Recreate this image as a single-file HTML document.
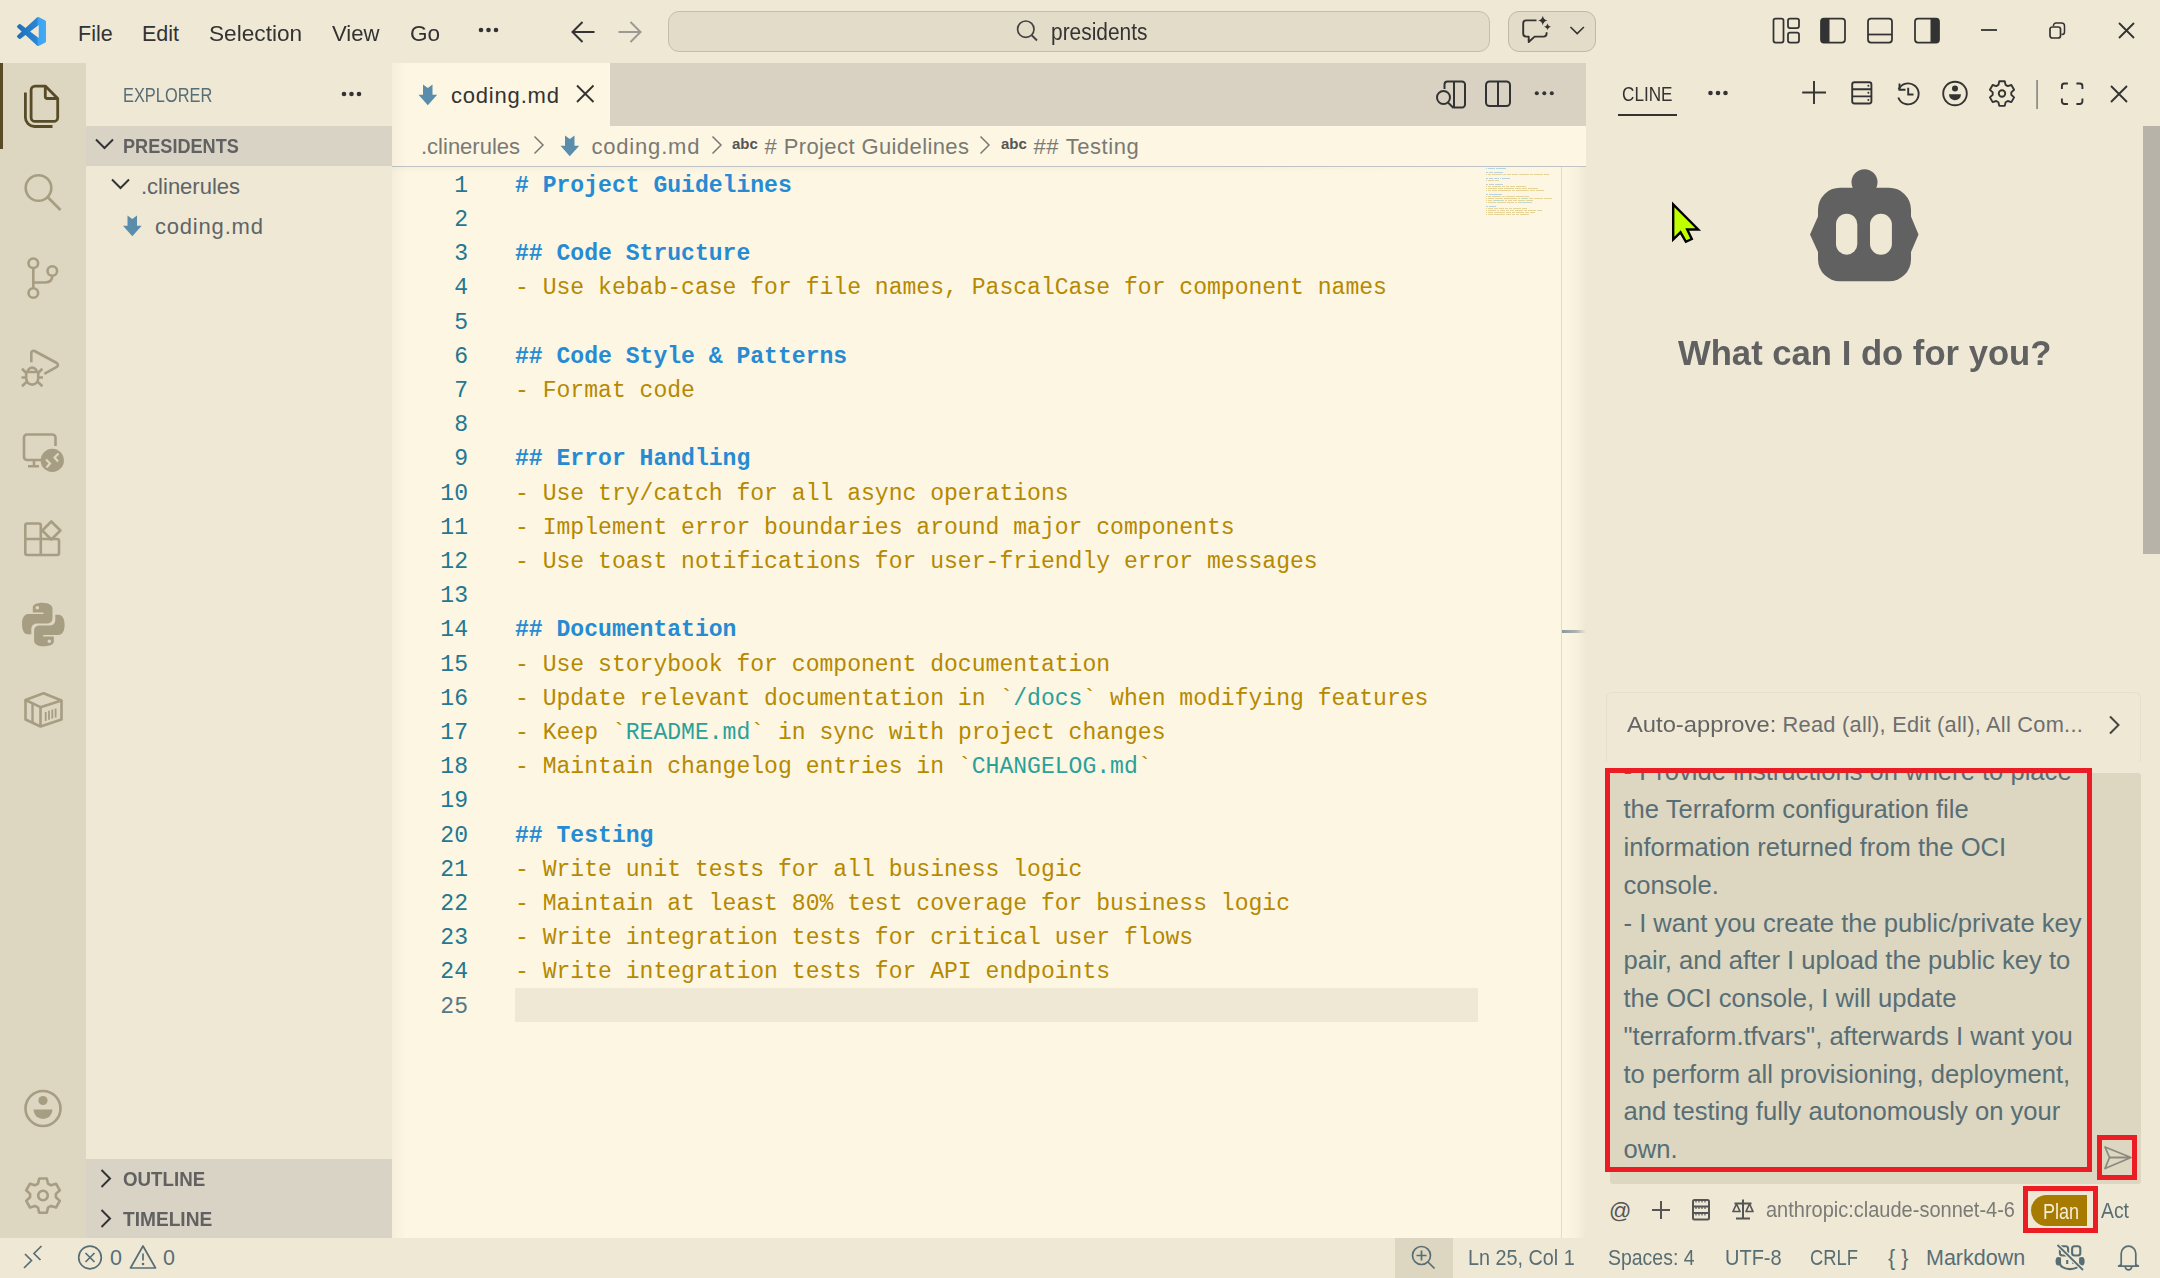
<!DOCTYPE html>
<html><head><meta charset="utf-8">
<style>
*{margin:0;padding:0;box-sizing:border-box}
html,body{width:2160px;height:1278px;overflow:hidden;background:#EEE8D5;font-family:"Liberation Sans",sans-serif;}
.abs{position:absolute}
svg{position:absolute;overflow:visible}
#title{left:0;top:0;width:2160px;height:63px;background:#EEE8D5}
.menu{position:absolute;top:20.5px;font-size:21.5px;color:#333;line-height:26px;white-space:nowrap}
#act{left:0;top:63px;width:86px;height:1175px;background:#DDD6C1}
#side{left:86px;top:63px;width:306px;height:1175px;background:#EEE8D5}
#editor{left:392px;top:63px;width:1194px;height:1175px;background:#FDF6E3}
#cline{left:1586px;top:63px;width:574px;height:1175px;background:#EEE8D5}
#status{left:0;top:1238px;width:2160px;height:40px;background:#EEE8D5}
.st{position:absolute;font-size:21.5px;color:#586E75;line-height:24px;white-space:nowrap}
.code{position:absolute;left:515px;font-family:"Liberation Mono",monospace;font-size:23.07px;white-space:pre;line-height:34.2px;height:34.2px}
.ln{position:absolute;font-family:"Liberation Mono",monospace;font-size:23.07px;color:#237893;line-height:34.2px;text-align:right;width:60px;left:408px}
.h{color:#268BD2;font-weight:bold}
.l{color:#B58900}
.c{color:#2AA198}
.bc{position:absolute;top:134px;font-size:22px;line-height:26px;color:#7A7A74;white-space:nowrap}
</style></head><body>
<div id="title" class="abs"></div>
<div id="act" class="abs"></div>
<div id="side" class="abs"></div>
<div id="editor" class="abs"></div>
<div id="cline" class="abs"></div>
<div id="status" class="abs"></div>
<svg style="left:17px;top:17px" width="29" height="29" viewBox="0 0 100 100">
<defs><linearGradient id="vsg" x1="0" y1="0" x2="1" y2="0"><stop offset="0" stop-color="#1F6FB8"/><stop offset="0.7" stop-color="#2B86D6"/><stop offset="0.72" stop-color="#3DA2F0"/><stop offset="1" stop-color="#44AAF5"/></linearGradient></defs>
<path fill="url(#vsg)" d="M96.46 10.8L75.86.87a6.23 6.23 0 0 0-7.1 1.2L29.3 38.08 12.12 25.04a4.16 4.16 0 0 0-5.32.24L1.3 30.28a4.17 4.17 0 0 0 0 6.16L16.2 50 1.3 63.56a4.17 4.17 0 0 0 0 6.16l5.5 5a4.16 4.16 0 0 0 5.32.24L29.3 61.92l39.46 36.01a6.22 6.22 0 0 0 7.1 1.2l20.6-9.91A6.25 6.25 0 0 0 100 83.59V16.41a6.25 6.25 0 0 0-3.54-5.63zM75.02 72.7L45.08 50l29.94-22.7v45.4z"/>
</svg>
<div class="menu" style="left:78px">File</div>
<div class="menu" style="left:142px">Edit</div>
<div class="menu" style="left:209px;transform:scaleX(1.054);transform-origin:0 0">Selection</div>
<div class="menu" style="left:332px;transform:scaleX(1.03);transform-origin:0 0">View</div>
<div class="menu" style="left:410px;transform:scaleX(1.05);transform-origin:0 0">Go</div>
<svg style="left:478px;top:26px" width="22" height="8"><circle cx="3" cy="4" r="2.3" fill="#333"/><circle cx="10.5" cy="4" r="2.3" fill="#333"/><circle cx="18" cy="4" r="2.3" fill="#333"/></svg>
<svg style="left:570px;top:20px" width="26" height="24" viewBox="0 0 26 24"><path d="M2.5 12H24.5M12.5 2L2.5 12L12.5 22" fill="none" stroke="#333" stroke-width="2"/></svg>
<svg style="left:617px;top:20px" width="26" height="24" viewBox="0 0 26 24"><path d="M1.5 12H23.5M13.5 2L23.5 12L13.5 22" fill="none" stroke="#9A9A92" stroke-width="2"/></svg>
<div class="abs" style="left:668px;top:11px;width:822px;height:41px;background:#E3DCC9;border:1.5px solid #C4BFAD;border-radius:11px"></div>
<svg style="left:1015px;top:18px" width="26" height="26" viewBox="0 0 26 26"><circle cx="10.8" cy="11.2" r="8.2" fill="none" stroke="#444" stroke-width="1.7"/><path d="M16.5 17L22 22.5" stroke="#444" stroke-width="1.9"/></svg>
<div class="menu" style="left:1050.5px;top:19.3px;font-size:23.5px;color:#333;transform:scaleX(0.89);transform-origin:0 0">presidents</div>
<div class="abs" style="left:1508px;top:11px;width:88px;height:41px;background:#E3DCC9;border:1.5px solid #BFBAA8;border-radius:11px"></div>
<svg style="left:0;top:0" width="1600" height="60" viewBox="0 0 1600 60"><path d="M1536.5 20.4H1526.2a3 3 0 0 0-3 3V33.6a3 3 0 0 0 3 3H1528.7V42L1534.6 36.6H1543.6a3 3 0 0 0 3-3V32.2" fill="none" stroke="#333" stroke-width="1.9" stroke-linejoin="round"/><path d="M1542.8 15.8Q1543.5 19.9 1547.6 20.6Q1543.5 21.3 1542.8 25.4Q1542.1 21.3 1538 20.6Q1542.1 19.9 1542.8 15.8z" fill="#333"/><path d="M1547.5 23.2Q1548 26.2 1551 26.7Q1548 27.2 1547.5 30.2Q1547 27.2 1544 26.7Q1547 26.2 1547.5 23.2z" fill="#333"/><path d="M1570.5 27L1577.2 33.6L1583.9 27" fill="none" stroke="#333" stroke-width="1.6"/></svg>
<!-- layout icons -->
<svg style="left:1771px;top:16px" width="30" height="29" viewBox="0 0 30 29"><rect x="2.5" y="2.5" width="10" height="24" rx="2" fill="none" stroke="#333" stroke-width="1.75"/><rect x="17" y="2.5" width="11" height="9.5" rx="2" fill="none" stroke="#333" stroke-width="1.75"/><rect x="17" y="16.5" width="11" height="10" rx="2" fill="none" stroke="#333" stroke-width="1.75"/></svg>
<svg style="left:1818px;top:16px" width="30" height="29" viewBox="0 0 30 29"><rect x="3" y="2.5" width="24" height="24" rx="3" fill="none" stroke="#333" stroke-width="1.75"/><path d="M6 2.5h5.5v24H6a3 3 0 0 1-3-3v-18a3 3 0 0 1 3-3z" fill="#333"/></svg>
<svg style="left:1865px;top:16px" width="30" height="29" viewBox="0 0 30 29"><rect x="3" y="2.5" width="24" height="24" rx="3" fill="none" stroke="#333" stroke-width="1.75"/><path d="M3 18.5H27" stroke="#333" stroke-width="1.75"/></svg>
<svg style="left:1912px;top:16px" width="30" height="29" viewBox="0 0 30 29"><rect x="3" y="2.5" width="24" height="24" rx="3" fill="none" stroke="#333" stroke-width="1.75"/><path d="M18.5 2.5H24a3 3 0 0 1 3 3v18a3 3 0 0 1-3 3h-5.5z" fill="#333"/></svg>
<svg style="left:1980px;top:28px" width="18" height="4"><path d="M1 2H17" stroke="#333" stroke-width="1.8"/></svg>
<svg style="left:2048px;top:21px" width="19" height="19" viewBox="0 0 19 19"><rect x="2" y="6" width="10.5" height="11" rx="2.3" fill="none" stroke="#333" stroke-width="1.7"/><path d="M5.5 5V4.5a2.5 2.5 0 0 1 2.5-2.5H13.5A3 3 0 0 1 16.5 5v6A2.5 2.5 0 0 1 14 13.5h-.5" fill="none" stroke="#333" stroke-width="1.5"/></svg>
<svg style="left:2117px;top:21px" width="19" height="19" viewBox="0 0 19 19"><path d="M2 2L17 17M17 2L2 17" stroke="#333" stroke-width="1.8"/></svg>

<div class="abs" style="left:0;top:63px;width:3px;height:86px;background:#584C27"></div>
<svg style="left:0;top:0" width="86" height="1238" viewBox="0 0 86 1238">
<g fill="none" stroke="#584C27" stroke-width="2.8" stroke-linejoin="round">
<path d="M45.3 86.1H35.1a4 4 0 0 0-4 4v27.3a4 4 0 0 0 4 4h18.6a4 4 0 0 0 4-4V98.5z"/>
<path d="M45.3 86.1V96.5a2 2 0 0 0 2 2h10.4"/>
<path d="M25.4 92.5V117.5a9 9 0 0 0 9 9H52.5"/>
</g>
<g fill="none" stroke="#A69D82" stroke-width="2.6" stroke-linejoin="round">
<circle cx="38.5" cy="188" r="12.8"/>
<path d="M48 197.5L60.5 210"/>
<circle cx="33.3" cy="263.3" r="4.8"/>
<circle cx="52.3" cy="271" r="4.8"/>
<circle cx="33.3" cy="293" r="4.8"/>
<path d="M33.3 268.1V288.2M52.3 275.8Q52.3 282.5 45 282.5H33.3"/>
<path d="M31.3 362.3V353a2.2 2.2 0 0 1 3.2-2l22.3 12a2.2 2.2 0 0 1 0 3.8L44.3 373.8"/>
<path d="M27.8 372a4.4 4.4 0 0 1 8.8 0"/>
<path d="M26.2 372H38.2V378.6a6 6 0 0 1-12 0z"/>
<path d="M22 368.8L26.3 373M42.4 368.8L38.1 373M21.5 377.5H26.2M38.2 377.5H43M22 386.2L26.5 382M42.4 386.2L37.9 382"/>
<path d="M55.5 446V438a3 3 0 0 0-3-3.5H27a3 3 0 0 0-3 3v19.5a3 3 0 0 0 3 3H41.5M34 461V466M28 466.2H39"/>
<path d="M27.3 523.5h11.5a2 2 0 0 1 2 2V539H26.3a1 1 0 0 1-1-1V525.5a2 2 0 0 1 2-2z"/>
<path d="M25.3 539V553a2 2 0 0 0 2 2H57a2 2 0 0 0 2-2V541a2 2 0 0 0-2-2H40.8V555"/>
<path d="M51.3 521.5L60.4 530.5L51.3 539.5L42.3 530.5z"/>
<path d="M25.5 700L43.5 693.3L61.5 700.5L40.5 707.2z"/>
<path d="M25.5 700V719.5L40.5 726.5V707.2M61.5 700.5V719.5L40.5 726.5"/>
<path d="M32.5 703V722" stroke-width="2.4"/>
<path d="M45.7 712V721M49 710.8V719.8M52.3 709.6V718.6M55.6 708.4V717.4" stroke-width="1.8"/>
<circle cx="43" cy="1108.5" r="17.5"/>
</g>
<circle cx="52.3" cy="460.4" r="11.6" fill="#A69D82"/>
<path d="M46 459.5L50 463.5L46.5 467.5M58.5 453.5L54.5 457.5L58 461.5" fill="none" stroke="#DDD6C1" stroke-width="2.2"/>
<path fill="#A69D82" d="M43.2 602.8c-11 0-10.4 4.8-10.4 4.8v5h10.6v1.5H28.6s-6.6-.8-6.6 9.9 5.8 10.3 5.8 10.3h3.5v-5s-.2-5.8 5.7-5.8h10s5.5.1 5.5-5.3v-9s.9-6.3-9.3-6.3zm-5.9 3.2a1.8 1.8 0 1 1 0 3.6 1.8 1.8 0 0 1 0-3.6z"/>
<path fill="#A69D82" d="M43.4 646.3c11 0 10.4-4.8 10.4-4.8v-5H43.2V635h14.8s6.6.8 6.6-9.9-5.8-10.3-5.8-10.3h-3.5v5s.2 5.8-5.7 5.8h-10s-5.5-.1-5.5 5.3v9s-.9 6.3 9.3 6.3zm5.9-3.2a1.8 1.8 0 1 1 0-3.6 1.8 1.8 0 0 1 0 3.6z"/>
<circle cx="43" cy="1100.5" r="4.6" fill="#A69D82"/>
<path d="M33.5 1109.5h19a0 0 0 0 1 0 0 9.5 9.5 0 0 1-19 0z" fill="#A69D82"/>
<g transform="translate(43 1195.5)">
<path fill="none" stroke="#A69D82" stroke-width="2.6" stroke-linejoin="round" d="M-3.8-17h7.6l1.2 5.1 3 1.7 5-1.6 3.8 6.6-3.9 3.6v3.4l3.9 3.6-3.8 6.6-5-1.6-3 1.7-1.2 5.1h-7.6l-1.2-5.1-3-1.7-5 1.6-3.8-6.6 3.9-3.6v-3.4l-3.9-3.6 3.8-6.6 5 1.6 3-1.7z"/>
<circle r="4.8" fill="none" stroke="#A69D82" stroke-width="2.6"/>
</g>
</svg>

<div class="abs" style="left:123px;top:84px;font-size:19.5px;line-height:22px;color:#586E75;transform:scaleX(0.84);transform-origin:0 0;white-space:nowrap">EXPLORER</div>
<svg style="left:341px;top:90px" width="22" height="8"><circle cx="3" cy="4" r="2.3" fill="#333"/><circle cx="10.5" cy="4" r="2.3" fill="#333"/><circle cx="18" cy="4" r="2.3" fill="#333"/></svg>
<div class="abs" style="left:86px;top:126px;width:306px;height:40px;background:#D8D3C4"></div>
<svg style="left:94px;top:136px" width="22" height="16" viewBox="0 0 22 16"><path d="M2 3.5L10.5 12L19 3.5" fill="none" stroke="#333" stroke-width="2"/></svg>
<div class="abs" style="left:123px;top:135px;font-size:19.5px;line-height:22px;color:#616161;font-weight:bold;transform:scaleX(0.93);transform-origin:0 0;white-space:nowrap">PRESIDENTS</div>
<svg style="left:110px;top:176px" width="22" height="16" viewBox="0 0 22 16"><path d="M2 3.5L10.5 12L19 3.5" fill="none" stroke="#333" stroke-width="2"/></svg>
<div class="abs" style="left:141px;top:174px;font-size:22px;line-height:26px;color:#5F6466;white-space:nowrap">.clinerules</div>
<svg style="left:123px;top:215px" width="19" height="22" viewBox="0 0 19 22"><path d="M4.5 0.4L9.3 4L14 0.4V10.8H18.7L9.3 21.2L0 10.8H4.5z" fill="#5A8DAC"/></svg>
<div class="abs" style="left:155px;top:214px;font-size:22px;line-height:26px;color:#5F6466;letter-spacing:0.8px;white-space:nowrap">coding.md</div>
<div class="abs" style="left:86px;top:1159px;width:306px;height:79px;background:#D8D3C4"></div>
<svg style="left:98px;top:1168px" width="16" height="22" viewBox="0 0 16 22"><path d="M3.5 2L12 10.5L3.5 19" fill="none" stroke="#333" stroke-width="2"/></svg>
<div class="abs" style="left:123px;top:1168px;font-size:19.5px;line-height:22px;color:#616161;font-weight:bold;transform:scaleX(0.96);transform-origin:0 0;white-space:nowrap">OUTLINE</div>
<svg style="left:98px;top:1208px" width="16" height="22" viewBox="0 0 16 22"><path d="M3.5 2L12 10.5L3.5 19" fill="none" stroke="#333" stroke-width="2"/></svg>
<div class="abs" style="left:123px;top:1208px;font-size:19.5px;line-height:22px;color:#616161;font-weight:bold;transform:scaleX(0.98);transform-origin:0 0;white-space:nowrap">TIMELINE</div>

<!-- tabs bar -->
<div class="abs" style="left:392px;top:63px;width:1194px;height:63px;background:#D9D2C2"></div>
<div class="abs" style="left:392px;top:63px;width:218px;height:63px;background:#FDF6E3"></div>
<svg style="left:418px;top:84px" width="20" height="22" viewBox="0 0 19 22"><path d="M4.5 0.4L9.3 4L14 0.4V10.8H18.7L9.3 21.2L0 10.8H4.5z" fill="#5A8DAC"/></svg>
<div class="abs" style="left:451px;top:83px;font-size:22px;line-height:26px;color:#333;letter-spacing:0.8px;white-space:nowrap">coding.md</div>
<svg style="left:575px;top:84px" width="20" height="20" viewBox="0 0 20 20"><path d="M2 1.5L18.5 18M18.5 1.5L2 18" stroke="#333" stroke-width="1.9"/></svg>
<svg style="left:1434px;top:79px" width="34" height="32" viewBox="0 0 34 32"><path d="M10.5 10V5.5a3 3 0 0 1 3-3H28a3 3 0 0 1 3 3V25.5a3 3 0 0 1-3 3H19.5M20 2.5V28.5" fill="none" stroke="#333" stroke-width="2"/><circle cx="9.5" cy="18.5" r="6.5" fill="none" stroke="#333" stroke-width="2"/><path d="M14 23.5L19.5 29" stroke="#333" stroke-width="2"/></svg>
<svg style="left:1483px;top:79px" width="30" height="30" viewBox="0 0 30 30"><rect x="3" y="2.5" width="24" height="24.5" rx="3.5" fill="none" stroke="#333" stroke-width="2"/><path d="M15 2.5V27" stroke="#333" stroke-width="2"/></svg>
<svg style="left:1533px;top:89px" width="24" height="8"><circle cx="3.8" cy="4.2" r="2" fill="#333"/><circle cx="11.3" cy="4.2" r="2" fill="#333"/><circle cx="18.8" cy="4.2" r="2" fill="#333"/></svg>
<!-- breadcrumbs -->
<div class="abs" style="left:392px;top:126px;width:1194px;height:41px;background:#FDF6E3;border-bottom:1px solid #BFC3C6"></div>
<div class="abs bc" style="left:421px">.clinerules</div>
<svg style="left:532px;top:135px" width="14" height="20" viewBox="0 0 14 20"><path d="M2.5 1.5L11 10L2.5 18.5" fill="none" stroke="#7A7A74" stroke-width="1.5"/></svg>
<svg style="left:560px;top:135px" width="20" height="22" viewBox="0 0 19 22"><path d="M4.5 0.4L9.3 4L14 0.4V10.8H18.7L9.3 21.2L0 10.8H4.5z" fill="#5A8DAC"/></svg>
<div class="abs bc" style="left:591.5px;letter-spacing:0.8px">coding.md</div>
<svg style="left:710px;top:135px" width="14" height="20" viewBox="0 0 14 20"><path d="M2.5 1.5L11 10L2.5 18.5" fill="none" stroke="#7A7A74" stroke-width="1.5"/></svg>
<div class="abs" style="left:732px;top:135px;font-size:15px;line-height:18px;font-weight:bold;color:#555;white-space:nowrap;transform:scaleX(1.0);transform-origin:0 0">abc</div>
<div class="abs bc" style="left:764.5px;letter-spacing:0.4px">#&nbsp;Project Guidelines</div>
<svg style="left:978px;top:135px" width="14" height="20" viewBox="0 0 14 20"><path d="M2.5 1.5L11 10L2.5 18.5" fill="none" stroke="#7A7A74" stroke-width="1.5"/></svg>
<div class="abs" style="left:1001px;top:135px;font-size:15px;line-height:18px;font-weight:bold;color:#555;white-space:nowrap">abc</div>
<div class="abs bc" style="left:1033.5px;letter-spacing:0.55px">##&nbsp;Testing</div>
<!-- scrollbar area -->
<div class="abs" style="left:1561px;top:167px;width:1px;height:1071px;background:#E2DBC8"></div>
<div class="abs" style="left:1562px;top:630px;width:24px;height:3px;background:#8C9A9C"></div>
<div class="abs" style="left:1562px;top:167px;width:24px;height:1071px;background:linear-gradient(90deg,rgba(238,232,213,0),rgba(238,232,213,0.35) 60%,rgba(238,232,213,1))"></div>
<!-- current line -->
<div class="abs" style="left:515px;top:988px;width:963px;height:34px;background:#EEE8D5"></div>
<div class="ln" style="top:168.7px">1</div>
<div class="code h" style="top:168.7px"># Project Guidelines</div>
<div class="ln" style="top:202.9px">2</div>
<div class="ln" style="top:237.1px">3</div>
<div class="code h" style="top:237.1px">## Code Structure</div>
<div class="ln" style="top:271.3px">4</div>
<div class="code l" style="top:271.3px">- Use kebab-case for file names, PascalCase for component names</div>
<div class="ln" style="top:305.5px">5</div>
<div class="ln" style="top:339.7px">6</div>
<div class="code h" style="top:339.7px">## Code Style &amp; Patterns</div>
<div class="ln" style="top:373.9px">7</div>
<div class="code l" style="top:373.9px">- Format code</div>
<div class="ln" style="top:408.1px">8</div>
<div class="ln" style="top:442.3px">9</div>
<div class="code h" style="top:442.3px">## Error Handling</div>
<div class="ln" style="top:476.5px">10</div>
<div class="code l" style="top:476.5px">- Use try/catch for all async operations</div>
<div class="ln" style="top:510.7px">11</div>
<div class="code l" style="top:510.7px">- Implement error boundaries around major components</div>
<div class="ln" style="top:544.9px">12</div>
<div class="code l" style="top:544.9px">- Use toast notifications for user-friendly error messages</div>
<div class="ln" style="top:579.1px">13</div>
<div class="ln" style="top:613.3px">14</div>
<div class="code h" style="top:613.3px">## Documentation</div>
<div class="ln" style="top:647.5px">15</div>
<div class="code l" style="top:647.5px">- Use storybook for component documentation</div>
<div class="ln" style="top:681.7px">16</div>
<div class="code l" style="top:681.7px">- Update relevant documentation in `<span class="c">/docs</span>` when modifying features</div>
<div class="ln" style="top:715.9px">17</div>
<div class="code l" style="top:715.9px">- Keep `<span class="c">README.md</span>` in sync with project changes</div>
<div class="ln" style="top:750.1px">18</div>
<div class="code l" style="top:750.1px">- Maintain changelog entries in `<span class="c">CHANGELOG.md</span>`</div>
<div class="ln" style="top:784.3px">19</div>
<div class="ln" style="top:818.5px">20</div>
<div class="code h" style="top:818.5px">## Testing</div>
<div class="ln" style="top:852.7px">21</div>
<div class="code l" style="top:852.7px">- Write unit tests for all business logic</div>
<div class="ln" style="top:886.9px">22</div>
<div class="code l" style="top:886.9px">- Maintain at least 80% test coverage for business logic</div>
<div class="ln" style="top:921.1px">23</div>
<div class="code l" style="top:921.1px">- Write integration tests for critical user flows</div>
<div class="ln" style="top:955.3px">24</div>
<div class="code l" style="top:955.3px">- Write integration tests for API endpoints</div>
<div class="ln" style="top:989.5px;color:#567983">25</div>
<div class="abs" style="left:1486px;top:167.5px;width:1px;height:1.4px;background:#268BD2;opacity:0.32"></div>
<div class="abs" style="left:1488px;top:167.5px;width:7px;height:1.4px;background:#268BD2;opacity:0.32"></div>
<div class="abs" style="left:1496px;top:167.5px;width:10px;height:1.4px;background:#268BD2;opacity:0.32"></div>
<div class="abs" style="left:1486px;top:171.5px;width:2px;height:1.4px;background:#268BD2;opacity:0.32"></div>
<div class="abs" style="left:1489px;top:171.5px;width:4px;height:1.4px;background:#268BD2;opacity:0.32"></div>
<div class="abs" style="left:1494px;top:171.5px;width:9px;height:1.4px;background:#268BD2;opacity:0.32"></div>
<div class="abs" style="left:1486px;top:173.5px;width:1px;height:1.4px;background:#B58900;opacity:0.32"></div>
<div class="abs" style="left:1488px;top:173.5px;width:3px;height:1.4px;background:#B58900;opacity:0.32"></div>
<div class="abs" style="left:1492px;top:173.5px;width:10px;height:1.4px;background:#B58900;opacity:0.32"></div>
<div class="abs" style="left:1503px;top:173.5px;width:3px;height:1.4px;background:#B58900;opacity:0.32"></div>
<div class="abs" style="left:1507px;top:173.5px;width:4px;height:1.4px;background:#B58900;opacity:0.32"></div>
<div class="abs" style="left:1512px;top:173.5px;width:6px;height:1.4px;background:#B58900;opacity:0.32"></div>
<div class="abs" style="left:1519px;top:173.5px;width:10px;height:1.4px;background:#B58900;opacity:0.32"></div>
<div class="abs" style="left:1530px;top:173.5px;width:3px;height:1.4px;background:#B58900;opacity:0.32"></div>
<div class="abs" style="left:1534px;top:173.5px;width:9px;height:1.4px;background:#B58900;opacity:0.32"></div>
<div class="abs" style="left:1544px;top:173.5px;width:5px;height:1.4px;background:#B58900;opacity:0.32"></div>
<div class="abs" style="left:1486px;top:177.5px;width:2px;height:1.4px;background:#268BD2;opacity:0.32"></div>
<div class="abs" style="left:1489px;top:177.5px;width:4px;height:1.4px;background:#268BD2;opacity:0.32"></div>
<div class="abs" style="left:1494px;top:177.5px;width:5px;height:1.4px;background:#268BD2;opacity:0.32"></div>
<div class="abs" style="left:1500px;top:177.5px;width:1px;height:1.4px;background:#268BD2;opacity:0.32"></div>
<div class="abs" style="left:1502px;top:177.5px;width:8px;height:1.4px;background:#268BD2;opacity:0.32"></div>
<div class="abs" style="left:1486px;top:179.5px;width:1px;height:1.4px;background:#B58900;opacity:0.32"></div>
<div class="abs" style="left:1488px;top:179.5px;width:6px;height:1.4px;background:#B58900;opacity:0.32"></div>
<div class="abs" style="left:1495px;top:179.5px;width:4px;height:1.4px;background:#B58900;opacity:0.32"></div>
<div class="abs" style="left:1486px;top:183.5px;width:2px;height:1.4px;background:#268BD2;opacity:0.32"></div>
<div class="abs" style="left:1489px;top:183.5px;width:5px;height:1.4px;background:#268BD2;opacity:0.32"></div>
<div class="abs" style="left:1495px;top:183.5px;width:8px;height:1.4px;background:#268BD2;opacity:0.32"></div>
<div class="abs" style="left:1486px;top:185.5px;width:1px;height:1.4px;background:#B58900;opacity:0.32"></div>
<div class="abs" style="left:1488px;top:185.5px;width:3px;height:1.4px;background:#B58900;opacity:0.32"></div>
<div class="abs" style="left:1492px;top:185.5px;width:9px;height:1.4px;background:#B58900;opacity:0.32"></div>
<div class="abs" style="left:1502px;top:185.5px;width:3px;height:1.4px;background:#B58900;opacity:0.32"></div>
<div class="abs" style="left:1506px;top:185.5px;width:3px;height:1.4px;background:#B58900;opacity:0.32"></div>
<div class="abs" style="left:1510px;top:185.5px;width:5px;height:1.4px;background:#B58900;opacity:0.32"></div>
<div class="abs" style="left:1516px;top:185.5px;width:10px;height:1.4px;background:#B58900;opacity:0.32"></div>
<div class="abs" style="left:1486px;top:187.5px;width:1px;height:1.4px;background:#B58900;opacity:0.32"></div>
<div class="abs" style="left:1488px;top:187.5px;width:9px;height:1.4px;background:#B58900;opacity:0.32"></div>
<div class="abs" style="left:1498px;top:187.5px;width:5px;height:1.4px;background:#B58900;opacity:0.32"></div>
<div class="abs" style="left:1504px;top:187.5px;width:10px;height:1.4px;background:#B58900;opacity:0.32"></div>
<div class="abs" style="left:1515px;top:187.5px;width:6px;height:1.4px;background:#B58900;opacity:0.32"></div>
<div class="abs" style="left:1522px;top:187.5px;width:5px;height:1.4px;background:#B58900;opacity:0.32"></div>
<div class="abs" style="left:1528px;top:187.5px;width:10px;height:1.4px;background:#B58900;opacity:0.32"></div>
<div class="abs" style="left:1486px;top:189.5px;width:1px;height:1.4px;background:#B58900;opacity:0.32"></div>
<div class="abs" style="left:1488px;top:189.5px;width:3px;height:1.4px;background:#B58900;opacity:0.32"></div>
<div class="abs" style="left:1492px;top:189.5px;width:5px;height:1.4px;background:#B58900;opacity:0.32"></div>
<div class="abs" style="left:1498px;top:189.5px;width:13px;height:1.4px;background:#B58900;opacity:0.32"></div>
<div class="abs" style="left:1512px;top:189.5px;width:3px;height:1.4px;background:#B58900;opacity:0.32"></div>
<div class="abs" style="left:1516px;top:189.5px;width:13px;height:1.4px;background:#B58900;opacity:0.32"></div>
<div class="abs" style="left:1530px;top:189.5px;width:5px;height:1.4px;background:#B58900;opacity:0.32"></div>
<div class="abs" style="left:1536px;top:189.5px;width:8px;height:1.4px;background:#B58900;opacity:0.32"></div>
<div class="abs" style="left:1486px;top:193.5px;width:2px;height:1.4px;background:#268BD2;opacity:0.32"></div>
<div class="abs" style="left:1489px;top:193.5px;width:13px;height:1.4px;background:#268BD2;opacity:0.32"></div>
<div class="abs" style="left:1486px;top:195.5px;width:1px;height:1.4px;background:#B58900;opacity:0.32"></div>
<div class="abs" style="left:1488px;top:195.5px;width:3px;height:1.4px;background:#B58900;opacity:0.32"></div>
<div class="abs" style="left:1492px;top:195.5px;width:9px;height:1.4px;background:#B58900;opacity:0.32"></div>
<div class="abs" style="left:1502px;top:195.5px;width:3px;height:1.4px;background:#B58900;opacity:0.32"></div>
<div class="abs" style="left:1506px;top:195.5px;width:9px;height:1.4px;background:#B58900;opacity:0.32"></div>
<div class="abs" style="left:1516px;top:195.5px;width:13px;height:1.4px;background:#B58900;opacity:0.32"></div>
<div class="abs" style="left:1486px;top:197.5px;width:1px;height:1.4px;background:#B58900;opacity:0.32"></div>
<div class="abs" style="left:1488px;top:197.5px;width:6px;height:1.4px;background:#B58900;opacity:0.32"></div>
<div class="abs" style="left:1495px;top:197.5px;width:8px;height:1.4px;background:#B58900;opacity:0.32"></div>
<div class="abs" style="left:1504px;top:197.5px;width:13px;height:1.4px;background:#B58900;opacity:0.32"></div>
<div class="abs" style="left:1518px;top:197.5px;width:2px;height:1.4px;background:#B58900;opacity:0.32"></div>
<div class="abs" style="left:1521px;top:197.5px;width:1px;height:1.4px;background:#B58900;opacity:0.32"></div>
<div class="abs" style="left:1522px;top:197.5px;width:5px;height:1.4px;background:#2AA198;opacity:0.32"></div>
<div class="abs" style="left:1527px;top:197.5px;width:1px;height:1.4px;background:#B58900;opacity:0.32"></div>
<div class="abs" style="left:1529px;top:197.5px;width:4px;height:1.4px;background:#B58900;opacity:0.32"></div>
<div class="abs" style="left:1534px;top:197.5px;width:9px;height:1.4px;background:#B58900;opacity:0.32"></div>
<div class="abs" style="left:1544px;top:197.5px;width:8px;height:1.4px;background:#B58900;opacity:0.32"></div>
<div class="abs" style="left:1486px;top:199.5px;width:1px;height:1.4px;background:#B58900;opacity:0.32"></div>
<div class="abs" style="left:1488px;top:199.5px;width:4px;height:1.4px;background:#B58900;opacity:0.32"></div>
<div class="abs" style="left:1493px;top:199.5px;width:1px;height:1.4px;background:#B58900;opacity:0.32"></div>
<div class="abs" style="left:1494px;top:199.5px;width:9px;height:1.4px;background:#2AA198;opacity:0.32"></div>
<div class="abs" style="left:1503px;top:199.5px;width:1px;height:1.4px;background:#B58900;opacity:0.32"></div>
<div class="abs" style="left:1505px;top:199.5px;width:2px;height:1.4px;background:#B58900;opacity:0.32"></div>
<div class="abs" style="left:1508px;top:199.5px;width:4px;height:1.4px;background:#B58900;opacity:0.32"></div>
<div class="abs" style="left:1513px;top:199.5px;width:4px;height:1.4px;background:#B58900;opacity:0.32"></div>
<div class="abs" style="left:1518px;top:199.5px;width:7px;height:1.4px;background:#B58900;opacity:0.32"></div>
<div class="abs" style="left:1526px;top:199.5px;width:7px;height:1.4px;background:#B58900;opacity:0.32"></div>
<div class="abs" style="left:1486px;top:201.5px;width:1px;height:1.4px;background:#B58900;opacity:0.32"></div>
<div class="abs" style="left:1488px;top:201.5px;width:8px;height:1.4px;background:#B58900;opacity:0.32"></div>
<div class="abs" style="left:1497px;top:201.5px;width:9px;height:1.4px;background:#B58900;opacity:0.32"></div>
<div class="abs" style="left:1507px;top:201.5px;width:7px;height:1.4px;background:#B58900;opacity:0.32"></div>
<div class="abs" style="left:1515px;top:201.5px;width:2px;height:1.4px;background:#B58900;opacity:0.32"></div>
<div class="abs" style="left:1518px;top:201.5px;width:1px;height:1.4px;background:#B58900;opacity:0.32"></div>
<div class="abs" style="left:1519px;top:201.5px;width:12px;height:1.4px;background:#2AA198;opacity:0.32"></div>
<div class="abs" style="left:1531px;top:201.5px;width:1px;height:1.4px;background:#B58900;opacity:0.32"></div>
<div class="abs" style="left:1486px;top:205.5px;width:2px;height:1.4px;background:#268BD2;opacity:0.32"></div>
<div class="abs" style="left:1489px;top:205.5px;width:7px;height:1.4px;background:#268BD2;opacity:0.32"></div>
<div class="abs" style="left:1486px;top:207.5px;width:1px;height:1.4px;background:#B58900;opacity:0.32"></div>
<div class="abs" style="left:1488px;top:207.5px;width:5px;height:1.4px;background:#B58900;opacity:0.32"></div>
<div class="abs" style="left:1494px;top:207.5px;width:4px;height:1.4px;background:#B58900;opacity:0.32"></div>
<div class="abs" style="left:1499px;top:207.5px;width:5px;height:1.4px;background:#B58900;opacity:0.32"></div>
<div class="abs" style="left:1505px;top:207.5px;width:3px;height:1.4px;background:#B58900;opacity:0.32"></div>
<div class="abs" style="left:1509px;top:207.5px;width:3px;height:1.4px;background:#B58900;opacity:0.32"></div>
<div class="abs" style="left:1513px;top:207.5px;width:8px;height:1.4px;background:#B58900;opacity:0.32"></div>
<div class="abs" style="left:1522px;top:207.5px;width:5px;height:1.4px;background:#B58900;opacity:0.32"></div>
<div class="abs" style="left:1486px;top:209.5px;width:1px;height:1.4px;background:#B58900;opacity:0.32"></div>
<div class="abs" style="left:1488px;top:209.5px;width:8px;height:1.4px;background:#B58900;opacity:0.32"></div>
<div class="abs" style="left:1497px;top:209.5px;width:2px;height:1.4px;background:#B58900;opacity:0.32"></div>
<div class="abs" style="left:1500px;top:209.5px;width:5px;height:1.4px;background:#B58900;opacity:0.32"></div>
<div class="abs" style="left:1506px;top:209.5px;width:3px;height:1.4px;background:#B58900;opacity:0.32"></div>
<div class="abs" style="left:1510px;top:209.5px;width:4px;height:1.4px;background:#B58900;opacity:0.32"></div>
<div class="abs" style="left:1515px;top:209.5px;width:8px;height:1.4px;background:#B58900;opacity:0.32"></div>
<div class="abs" style="left:1524px;top:209.5px;width:3px;height:1.4px;background:#B58900;opacity:0.32"></div>
<div class="abs" style="left:1528px;top:209.5px;width:8px;height:1.4px;background:#B58900;opacity:0.32"></div>
<div class="abs" style="left:1537px;top:209.5px;width:5px;height:1.4px;background:#B58900;opacity:0.32"></div>
<div class="abs" style="left:1486px;top:211.5px;width:1px;height:1.4px;background:#B58900;opacity:0.32"></div>
<div class="abs" style="left:1488px;top:211.5px;width:5px;height:1.4px;background:#B58900;opacity:0.32"></div>
<div class="abs" style="left:1494px;top:211.5px;width:11px;height:1.4px;background:#B58900;opacity:0.32"></div>
<div class="abs" style="left:1506px;top:211.5px;width:5px;height:1.4px;background:#B58900;opacity:0.32"></div>
<div class="abs" style="left:1512px;top:211.5px;width:3px;height:1.4px;background:#B58900;opacity:0.32"></div>
<div class="abs" style="left:1516px;top:211.5px;width:8px;height:1.4px;background:#B58900;opacity:0.32"></div>
<div class="abs" style="left:1525px;top:211.5px;width:4px;height:1.4px;background:#B58900;opacity:0.32"></div>
<div class="abs" style="left:1530px;top:211.5px;width:5px;height:1.4px;background:#B58900;opacity:0.32"></div>
<div class="abs" style="left:1486px;top:213.5px;width:1px;height:1.4px;background:#B58900;opacity:0.32"></div>
<div class="abs" style="left:1488px;top:213.5px;width:5px;height:1.4px;background:#B58900;opacity:0.32"></div>
<div class="abs" style="left:1494px;top:213.5px;width:11px;height:1.4px;background:#B58900;opacity:0.32"></div>
<div class="abs" style="left:1506px;top:213.5px;width:5px;height:1.4px;background:#B58900;opacity:0.32"></div>
<div class="abs" style="left:1512px;top:213.5px;width:3px;height:1.4px;background:#B58900;opacity:0.32"></div>
<div class="abs" style="left:1516px;top:213.5px;width:3px;height:1.4px;background:#B58900;opacity:0.32"></div>
<div class="abs" style="left:1520px;top:213.5px;width:9px;height:1.4px;background:#B58900;opacity:0.32"></div>
<div class="abs" style="left:392px;top:63px;width:14px;height:1175px;background:linear-gradient(90deg,rgba(80,70,40,0.045),rgba(80,70,40,0))"></div>
<div class="abs" style="left:392px;top:167px;width:1090px;height:6px;background:linear-gradient(180deg,rgba(80,70,40,0.035),rgba(80,70,40,0));-webkit-mask-image:linear-gradient(90deg,#000 75%,transparent)"></div>

<div class="abs" style="left:1622px;top:83px;font-size:19.5px;line-height:22px;color:#333;transform:scaleX(0.88);transform-origin:0 0;white-space:nowrap">CLINE</div>
<div class="abs" style="left:1618px;top:114px;width:59px;height:1.5px;background:#333"></div>
<svg style="left:1707px;top:89px" width="24" height="8"><circle cx="3.5" cy="4" r="2.3" fill="#333"/><circle cx="11" cy="4" r="2.3" fill="#333"/><circle cx="18.5" cy="4" r="2.3" fill="#333"/></svg>
<svg style="left:0;top:0" width="2160" height="130" viewBox="0 0 2160 130">
<g fill="none" stroke="#333" stroke-width="1.9">
<path d="M1814 81V104M1802.2 92.5H1826"/>
<rect x="1852.2" y="82.2" width="19.2" height="21.3" rx="2.2"/>
<path d="M1852.2 89.3H1871.4M1852.2 96.4H1871.4"/>
<path d="M1898.6 89.5A10.5 10.5 0 1 1 1898.3 97.5"/>
<path d="M1899.5 83.5V89.8H1905.5"/>
<path d="M1908.2 87.8V94.5H1913.5"/>
<circle cx="1955" cy="93.5" r="11.8"/>
<path d="M2037.1 80V109" stroke="#8F8F88" stroke-width="1.8"/>
<path d="M2061.9 89V86a2.5 2.5 0 0 1 2.5-2.5h3.5M2082.4 89V86a2.5 2.5 0 0 0-2.5-2.5h-3.5M2061.9 98.5v3a2.5 2.5 0 0 0 2.5 2.5h3.5M2082.4 98.5v3a2.5 2.5 0 0 1-2.5 2.5h-3.5"/>
<path d="M2111 86L2127 102M2127 86L2111 102"/>
</g>
<circle cx="1868.4" cy="85.8" r="1" fill="#333"/><circle cx="1868.4" cy="92.8" r="1" fill="#333"/><circle cx="1868.4" cy="100" r="1" fill="#333"/>
<circle cx="1955" cy="88.6" r="3" fill="#333"/>
<path d="M1949 94.2h12a6 6 0 0 1-12 0z" fill="#333"/>
<g transform="translate(2002 93.5) scale(0.72)">
<path fill="none" stroke="#333" stroke-width="2.6" stroke-linejoin="round" d="M-3.8-17h7.6l1.2 5.1 3 1.7 5-1.6 3.8 6.6-3.9 3.6v3.4l3.9 3.6-3.8 6.6-5-1.6-3 1.7-1.2 5.1h-7.6l-1.2-5.1-3-1.7-5 1.6-3.8-6.6 3.9-3.6v-3.4l-3.9-3.6 3.8-6.6 5 1.6 3-1.7z"/>
<circle r="4.5" fill="none" stroke="#333" stroke-width="2.6"/>
</g>
</svg>
<!-- scrollbar -->
<div class="abs" style="left:2143px;top:126px;width:17px;height:428px;background:#B7B3A8"></div>
<!-- robot -->
<svg style="left:0;top:0" width="2160" height="400" viewBox="0 0 2160 400">
<circle cx="1864.5" cy="182.3" r="13" fill="#616161"/>
<path fill="#616161" d="M1840 187.7H1889A22 22 0 0 1 1911 209.7V216.5L1918.5 234.5L1911 252V259.3A22 22 0 0 1 1889 281.3H1840A22 22 0 0 1 1818 259.3V252L1810 234.5L1818 216.5V209.7A22 22 0 0 1 1840 187.7z"/>
<rect x="1836" y="213.7" width="21.3" height="41" rx="10.6" fill="#EEE8D5"/>
<rect x="1870" y="213.7" width="21.9" height="41" rx="10.9" fill="#EEE8D5"/>
</svg>
<div class="abs" style="left:1678px;top:331.5px;font-size:35px;line-height:41px;color:#616161;font-weight:bold;white-space:nowrap;transform:scaleX(0.99);transform-origin:0 0">What can I do for you?</div>
<!-- auto approve -->
<div class="abs" style="left:1606px;top:692px;width:535px;height:70px;border:1px solid #E5DFCD;border-bottom:none;border-radius:6px 6px 0 0"></div>
<div class="abs" style="left:1627px;top:712px;font-size:21.8px;line-height:26px;color:#646464;white-space:nowrap;transform:scaleX(1.09);transform-origin:0 0">Auto-approve:</div>
<div class="abs" style="left:1782.6px;top:712px;font-size:21.8px;line-height:26px;color:#6E6E6E;white-space:nowrap;letter-spacing:0.25px">Read (all), Edit (all), All Com...</div>
<svg style="left:2105px;top:713px" width="18" height="24" viewBox="0 0 18 24"><path d="M5 3.5L13.5 12L5 20.5" fill="none" stroke="#444" stroke-width="2"/></svg>
<!-- input -->
<div class="abs" style="left:1610px;top:773px;width:531px;height:411px;background:#DDD6C1;border-radius:3px"></div>
<div class="abs" style="left:1610px;top:773px;width:482px;height:394px;overflow:hidden">
<div style="position:absolute;left:13.5px;top:-19.7px;font-size:25.6px;line-height:37.8px;color:#586E75;white-space:pre">- Provide instructions on where to place
the Terraform configuration file
information returned from the OCI
console.
- I want you create the public/private key
pair, and after I upload the public key to
the OCI console, I will update
"terraform.tfvars", afterwards I want you
to perform all provisioning, deployment,
and testing fully autonomously on your
own.</div>
</div>
<div class="abs" style="left:1605px;top:768px;width:487px;height:404px;border:5px solid #EC1C24"></div>
<div class="abs" style="left:2097px;top:1135px;width:40px;height:45px;border:5px solid #EC1C24"></div>
<svg style="left:2102px;top:1144px" width="32" height="28" viewBox="0 0 32 28"><path d="M3 3L29 13.5L3 24.5L7.5 13.5z M7.5 13.5H29" fill="none" stroke="#8C8A80" stroke-width="1.8" stroke-linejoin="round"/></svg>
<!-- bottom toolbar -->
<div class="abs" style="left:1609px;top:1197px;font-size:22px;line-height:28px;color:#555;white-space:nowrap">@</div>
<svg style="left:1650px;top:1199px" width="22" height="22" viewBox="0 0 22 22"><path d="M11 2V20M2 11H20" stroke="#555" stroke-width="2"/></svg>
<svg style="left:1690px;top:1197px" width="22" height="25" viewBox="0 0 22 25"><rect x="3" y="3" width="16" height="19.5" rx="1.5" fill="none" stroke="#555" stroke-width="2"/><path d="M3 9.5H19M3 16H19" stroke="#555" stroke-width="2"/><path d="M6 3v2.5M9 3v2.5M12 3v2.5M15 3v2.5M6 9.5v2.5M9 9.5v2.5M12 9.5v2.5M15 9.5v2.5M6 16v2.5M9 16v2.5M12 16v2.5M15 16v2.5" stroke="#555" stroke-width="1.2"/></svg>
<svg style="left:1731px;top:1197px" width="24" height="25" viewBox="0 0 24 25"><path d="M12 2.5V21M5 21.5H19M3.5 6.5H20.5M12 6.5" fill="none" stroke="#555" stroke-width="2"/><path d="M5.5 7L2 14.5H9z M18.5 7L15 14.5H22z" fill="none" stroke="#555" stroke-width="1.7" stroke-linejoin="round"/></svg>
<div class="abs" style="left:1766px;top:1197px;font-size:21.5px;line-height:26px;color:#7B7B76;white-space:nowrap;transform:scaleX(0.93);transform-origin:0 0">anthropic:claude-sonnet-4-6</div>
<div class="abs" style="left:2023px;top:1186px;width:75px;height:47px;border:5px solid #EC1C24"></div>
<div class="abs" style="left:2031px;top:1195px;width:56px;height:31px;background:#A67B00;border-radius:15.5px 0 0 15.5px"></div>
<div class="abs" style="left:2043px;top:1199px;font-size:21.5px;line-height:26px;color:#F4EEDC;white-space:nowrap;transform:scaleX(0.84);transform-origin:0 0">Plan</div>
<div class="abs" style="left:2101px;top:1198px;font-size:22px;line-height:26px;color:#586E75;white-space:nowrap;transform:scaleX(0.88);transform-origin:0 0">Act</div>
<!-- cursor -->
<svg style="left:0;top:0" width="2160" height="300" viewBox="0 0 2160 300"><path d="M1673.2 204.3V239.5L1680.5 232.3L1685.9 241.8L1691.8 239L1687.2 229.5H1698.2z" fill="#BFFF00" stroke="#000" stroke-width="2.4" stroke-linejoin="miter"/></svg>

<svg style="left:20px;top:1243px" width="26" height="28" viewBox="0 0 26 28"><path d="M4 25L11.5 17.5L5 11M21.5 3L14 10.5L20.5 17" fill="none" stroke="#586E75" stroke-width="1.7"/></svg>
<svg style="left:76px;top:1244px" width="28" height="28" viewBox="0 0 28 28"><circle cx="14" cy="13.5" r="11.3" fill="none" stroke="#586E75" stroke-width="1.7"/><path d="M9.5 9L18.5 18M18.5 9L9.5 18" stroke="#586E75" stroke-width="1.7"/></svg>
<div class="st" style="left:110px;top:1246px">0</div>
<svg style="left:128px;top:1243px" width="30" height="28" viewBox="0 0 30 28"><path d="M15 3L27.5 25H2.5z" fill="none" stroke="#586E75" stroke-width="1.7" stroke-linejoin="round"/><path d="M15 10.5V17.5" stroke="#586E75" stroke-width="1.7"/><circle cx="15" cy="21" r="1.3" fill="#586E75"/></svg>
<div class="st" style="left:163px;top:1246px">0</div>
<div class="abs" style="left:1395px;top:1238px;width:58px;height:40px;background:#DDD6C1"></div>
<svg style="left:1409px;top:1244px" width="30" height="28" viewBox="0 0 30 28"><circle cx="12.5" cy="11.5" r="9" fill="none" stroke="#586E75" stroke-width="1.7"/><path d="M12.5 6.5V16.5M7.5 11.5H17.5M19 18L25.5 24.5" stroke="#586E75" stroke-width="1.7"/></svg>
<div class="st" style="left:1468px;top:1246px;transform:scaleX(0.92);transform-origin:0 0">Ln 25, Col 1</div>
<div class="st" style="left:1608px;top:1246px;transform:scaleX(0.905);transform-origin:0 0">Spaces: 4</div>
<div class="st" style="left:1725px;top:1246px;transform:scaleX(0.93);transform-origin:0 0">UTF-8</div>
<div class="st" style="left:1810px;top:1246px;transform:scaleX(0.855);transform-origin:0 0">CRLF</div>
<div class="st" style="left:1888px;top:1246px">{ }</div>
<div class="st" style="left:1926px;top:1246px">Markdown</div>
<svg style="left:0;top:1238px" width="2160" height="40" viewBox="0 1238 2160 40">
<g fill="none" stroke="#586E75" stroke-width="2.1">
<rect x="2059.9" y="1246.3" width="8.2" height="9.2" rx="2.5"/>
<rect x="2072.1" y="1246.3" width="8.2" height="9.2" rx="2.5"/>
<path d="M2060 1257.5V1263.5a10.1 5.6 0 0 0 20.2 0V1257.5"/>
<path d="M2067.2 1260V1264M2073.3 1260V1264"/>
</g>
<ellipse cx="2058.2" cy="1261.3" rx="2.6" ry="4.3" fill="#586E75"/>
<ellipse cx="2082" cy="1261.3" rx="2.6" ry="4.3" fill="#586E75"/>
<path d="M2057.5 1245L2083 1270" stroke="#EEE8D5" stroke-width="4.2"/>
<path d="M2057.5 1245L2083 1270" stroke="#586E75" stroke-width="1.8"/>
<path d="M2121.2 1264.8V1253.5a7.3 7.3 0 0 1 14.6 0V1264.8l2.6 1.3H2118.6z" fill="none" stroke="#586E75" stroke-width="1.7" stroke-linejoin="round"/>
<path d="M2125.2 1266.6a3.3 3.3 0 0 0 6.6 0" fill="none" stroke="#586E75" stroke-width="1.7"/>
</svg>

</body></html>
